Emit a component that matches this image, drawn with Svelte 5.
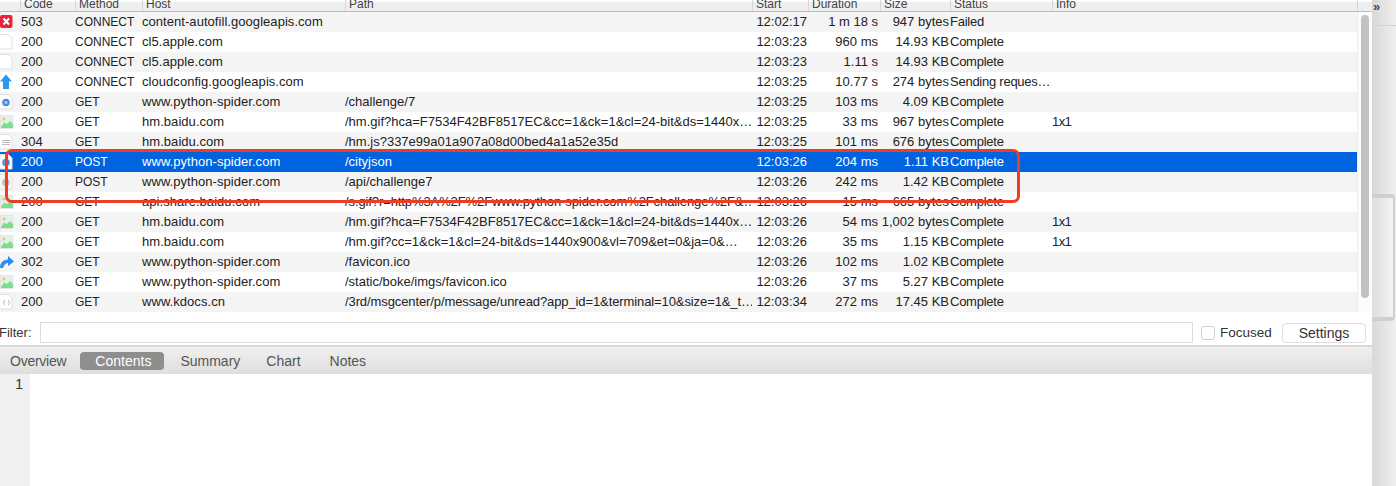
<script>
  const columns = [
    { key: "code", label: "Code" },
    { key: "method", label: "Method" },
    { key: "host", label: "Host" },
    { key: "path", label: "Path" },
    { key: "start", label: "Start" },
    { key: "duration", label: "Duration" },
    { key: "size", label: "Size" },
    { key: "status", label: "Status" },
    { key: "info", label: "Info" },
  ];

  const hca = "/hm.gif?hca=F7534F42BF8517EC&cc=1&ck=1&cl=24-bit&ds=1440x…";

  const rows = [
    { icon: "error", code: 503, method: "CONNECT", host: "content-autofill.googleapis.com", path: "", start: "12:02:17", duration: "1 m 18 s", size: "947 bytes", status: "Failed", info: "" },
    { icon: "blank", code: 200, method: "CONNECT", host: "cl5.apple.com", path: "", start: "12:03:23", duration: "960 ms", size: "14.93 KB", status: "Complete", info: "" },
    { icon: "blank", code: 200, method: "CONNECT", host: "cl5.apple.com", path: "", start: "12:03:23", duration: "1.11 s", size: "14.93 KB", status: "Complete", info: "" },
    { icon: "up", code: 200, method: "CONNECT", host: "cloudconfig.googleapis.com", path: "", start: "12:03:25", duration: "10.77 s", size: "274 bytes", status: "Sending reques…", info: "" },
    { icon: "web", code: 200, method: "GET", host: "www.python-spider.com", path: "/challenge/7", start: "12:03:25", duration: "103 ms", size: "4.09 KB", status: "Complete", info: "" },
    { icon: "image", code: 200, method: "GET", host: "hm.baidu.com", path: hca, start: "12:03:25", duration: "33 ms", size: "967 bytes", status: "Complete", info: "1x1" },
    { icon: "text", code: 304, method: "GET", host: "hm.baidu.com", path: "/hm.js?337e99a01a907a08d00bed4a1a52e35d", start: "12:03:25", duration: "101 ms", size: "676 bytes", status: "Complete", info: "" },
    { icon: "web", code: 200, method: "POST", host: "www.python-spider.com", path: "/cityjson", start: "12:03:26", duration: "204 ms", size: "1.11 KB", status: "Complete", info: "", selected: true },
    { icon: "web", code: 200, method: "POST", host: "www.python-spider.com", path: "/api/challenge7", start: "12:03:26", duration: "242 ms", size: "1.42 KB", status: "Complete", info: "", faded: true },
    { icon: "image", code: 200, method: "GET", host: "api.share.baidu.com", path: "/s.gif?r=http%3A%2F%2Fwww.python-spider.com%2Fchallenge%2F&…", start: "12:03:26", duration: "15 ms", size: "665 bytes", status: "Complete", info: "", tight: true },
    { icon: "image", code: 200, method: "GET", host: "hm.baidu.com", path: hca, start: "12:03:26", duration: "54 ms", size: "1,002 bytes", status: "Complete", info: "1x1" },
    { icon: "image", code: 200, method: "GET", host: "hm.baidu.com", path: "/hm.gif?cc=1&ck=1&cl=24-bit&ds=1440x900&vl=709&et=0&ja=0&…", start: "12:03:26", duration: "35 ms", size: "1.15 KB", status: "Complete", info: "1x1" },
    { icon: "redirect", code: 302, method: "GET", host: "www.python-spider.com", path: "/favicon.ico", start: "12:03:26", duration: "102 ms", size: "1.02 KB", status: "Complete", info: "" },
    { icon: "image", code: 200, method: "GET", host: "www.python-spider.com", path: "/static/boke/imgs/favicon.ico", start: "12:03:26", duration: "37 ms", size: "5.27 KB", status: "Complete", info: "" },
    { icon: "json", code: 200, method: "GET", host: "www.kdocs.cn", path: "/3rd/msgcenter/p/message/unread?app_id=1&terminal=10&size=1&_t…", start: "12:03:34", duration: "272 ms", size: "17.45 KB", status: "Complete", info: "", tight: true },
  ];

  const tabs = ["Overview", "Contents", "Summary", "Chart", "Notes"];
</script>

<div class="window">
  <div class="main">
    <div class="head">
      <span class="head-icon"></span>
      {#each columns as c}
        <span class="col {c.key}">{c.label}</span>
      {/each}
      <span class="head-rest"></span>
    </div>

    <div class="list">
      <div class="rows">
        {#each rows as r, i}
          <div class="row" class:odd={i % 2 === 0} class:selected={r.selected} class:tight={r.tight}>
            <span class="icon">
              <svg width="14" height="16" viewBox="0 0 14 16">
                {#if r.icon === "error"}
                  <rect x="0" y="1" width="12.5" height="13" rx="2" fill="#e8243c" />
                  <path d="M3.5 4.5l5.5 6M9 4.5l-5.5 6" stroke="#fff" stroke-width="2" />
                {:else if r.icon === "up"}
                  <path d="M6 .5L12 7.5H9V15H3V7.5H0Z" fill="#2a96f0" />
                {:else if r.icon === "redirect"}
                  <path d="M0 14C0 9 3 5.5 8 5.5V2L14 7.5L8 12V9C5.5 9 4 11 3 14Z" fill="#2a8ff0" />
                {:else if r.icon === "image"}
                  <rect x=".5" y="1.5" width="12.5" height="13" fill="#dff3ee" stroke="#e4e4e4" />
                  <circle cx="4" cy="5" r="1.6" fill="#f6c453" />
                  <path d="M1 13L4 8.5L7 10L10 7L13 10V14H1Z" fill="#7fdc8e" />
                {:else}
                  <path d="M-1 .5H8.5L12 4V15H-1Z" fill={r.faded ? "#f6f6f6" : "#fff"} stroke="#dfdfdf" />
                  {#if r.icon === "web"}
                    <circle cx="6" cy="8.5" r="3.8" fill={r.faded ? "#bdbdbd" : "#4a90d8"} />
                    <circle cx="6" cy="8.5" r="1.5" fill={r.faded ? "#d8d8d8" : "#a8cdf0"} />
                  {:else if r.icon === "text"}
                    <path d="M2 6.5H10M2 8.5H10M2 10.5H10" stroke="#bdbdbd" />
                  {:else if r.icon === "json"}
                    <path d="M5 6C3.8 6 4.4 8.5 3.4 8.5C4.4 8.5 3.8 11 5 11M8 6C9.2 6 8.6 8.5 9.6 8.5C8.6 8.5 9.2 11 8 11" fill="none" stroke="#9a9a9a" stroke-width=".8" />
                  {/if}
                {/if}
              </svg>
            </span>
            {#each columns as c}
              <span class="col {c.key}">{r[c.key]}</span>
            {/each}
          </div>
        {/each}
      </div>
      <div class="track"><div class="thumb"></div></div>
    </div>

    <div class="filter">
      <label for="filter">Filter:</label>
      <input id="filter" type="text" />
      <span class="check"></span>
      <span class="check-label">Focused</span>
      <button type="button">Settings</button>
    </div>

    <div class="tabs">
      {#each tabs as t}
        <span class="tab" class:active={t === "Contents"}>{t}</span>
      {/each}
    </div>

    <div class="editor">
      <div class="gutter">1</div>
    </div>
  </div>

  <div class="side">
    <div class="side-top">»</div>
    <div class="side-box"></div>
  </div>

  <div class="mark"></div>
</div>

<style>
  :global(body) {
    margin: 0;
    background: #fff;
  }

  .window {
    position: relative;
    display: flex;
    width: 1396px;
    height: 486px;
    overflow: hidden;
    font-family: "Liberation Sans", Arial, sans-serif;
    font-size: 13px;
    color: #222;
  }

  .main {
    width: 1372px;
    display: flex;
    flex-direction: column;
    flex: none;
  }

  .head {
    display: flex;
    height: 12px;
    box-sizing: border-box;
    line-height: 9px;
    font-size: 12px;
    color: #444;
    background: linear-gradient(#fff 0, #fff 2px, #efefef 2px);
    border-bottom: 1px solid #bdbdbd;
    overflow: hidden;
  }

  .head .col {
    box-sizing: border-box;
    padding: 0 0 0 3px;
    border-left: 1px solid #d6d6d6;
    text-align: left;
    font-size: 12px;
    letter-spacing: 0;
  }

  .head-icon {
    width: 20px;
    flex: none;
  }

  .head-rest {
    flex: 1;
    border-left: 1px solid #d6d6d6;
  }

  .list {
    display: flex;
    height: 300px;
  }

  .rows {
    width: 1357px;
    flex: none;
  }

  .row {
    display: flex;
    height: 20px;
    line-height: 20px;
    background: #fff;
    white-space: nowrap;
  }

  .row.odd {
    background: #f4f4f4;
  }

  .row.selected {
    background: #0064e0;
    color: #fff;
  }

  .icon {
    width: 20px;
    flex: none;
    display: flex;
    align-items: center;
  }

  .col {
    flex: none;
    box-sizing: border-box;
    overflow: hidden;
  }

  .code { width: 55px; padding-left: 1px; }
  .method { width: 67px; font-size: 12px; }
  .host { width: 203px; letter-spacing: 0.05px; }
  .path { width: 407px; }
  .row.tight .path { letter-spacing: -0.1px; }
  .start { width: 56px; text-align: right; padding-right: 1px; }
  .duration { width: 72px; text-align: right; padding-right: 2px; }
  .size { width: 70px; text-align: right; padding-right: 1px; }
  .status { width: 102px; letter-spacing: -0.25px; }
  .info { width: 305px; letter-spacing: -0.6px; }

  .track {
    width: 15px;
    flex: none;
    background: #fcfcfc;
    border-left: 1px solid #ececec;
    box-sizing: border-box;
  }

  .thumb {
    width: 8px;
    height: 283px;
    margin: 3px 0 0 3px;
    background: #c2c2c2;
    border-radius: 4px;
  }

  .filter {
    display: flex;
    align-items: center;
    height: 35px;
    padding: 10px 0 2px;
    box-sizing: border-box;
    background: #fff;
    border-bottom: 2px solid #d8d8d8;
    color: #333;
  }

  .filter label {
    width: 40px;
    flex: none;
    margin-left: -1px;
  }

  .filter input {
    width: 1153px;
    height: 21px;
    flex: none;
    box-sizing: border-box;
    border: 1px solid #dcdcdc;
    margin: 0 8px 0 1px;
    padding: 0;
    background: #fff;
  }

  .check {
    width: 14px;
    height: 14px;
    flex: none;
    box-sizing: border-box;
    border: 1px solid #d0d0d0;
    border-radius: 3px;
    margin-right: 5px;
  }

  .check-label {
    width: 62px;
    flex: none;
    font-size: 13.5px;
  }

  .filter button {
    width: 84px;
    height: 20px;
    flex: none;
    box-sizing: border-box;
    border: 1px solid #dedede;
    border-radius: 4px;
    background: #fff;
    color: #333;
    font: inherit;
    font-size: 14px;
    padding: 0;
  }

  .tabs {
    display: flex;
    align-items: center;
    height: 27px;
    box-sizing: border-box;
    background: linear-gradient(#f0f0f0, #dedede);
    color: #555;
    font-size: 14px;
  }

  .tab {
    height: 18px;
    line-height: 18px;
  }

  .tab:nth-child(1) { margin-left: 10px; letter-spacing: -0.25px; }
  .tab:nth-child(2) { margin-left: 14px; }
  .tab:nth-child(3) { margin-left: 16px; }
  .tab:nth-child(4) { margin-left: 26px; }
  .tab:nth-child(5) { margin-left: 29px; }

  .tab.active {
    background: #8e8e8e;
    color: #fff;
    border-radius: 4px;
    padding: 0 13px 0 15px;
  }

  .editor {
    flex: 1;
    display: flex;
    background: #fff;
  }

  .gutter {
    width: 30px;
    box-sizing: border-box;
    background: #f0f0f0;
    text-align: right;
    padding: 2px 7px 0 0;
    font-size: 14px;
    color: #333;
  }

  .side {
    flex: 1;
    background: linear-gradient(90deg, #d8d8d8, #f0f0f0);
    position: relative;
  }

  .side-top {
    height: 26px;
    padding-left: 1px;
    line-height: 14px;
    font-size: 13px;
    font-weight: bold;
    color: #444;
    border-bottom: 1px solid #d4d4d4;
    box-sizing: border-box;
  }

  .side-box {
    position: absolute;
    left: 0;
    top: 194px;
    width: 23px;
    height: 127px;
    box-sizing: border-box;
    border: solid #cfcfcf;
    border-width: 4px 2px 4px 0;
    border-radius: 0 4px 4px 0;
    background: linear-gradient(90deg, #dedede, #f3f3f3);
  }

  .mark {
    position: absolute;
    left: 5px;
    top: 149px;
    width: 1015px;
    height: 54px;
    box-sizing: border-box;
    border: 3px solid #ee3d24;
    border-radius: 7px;
  }
</style>
